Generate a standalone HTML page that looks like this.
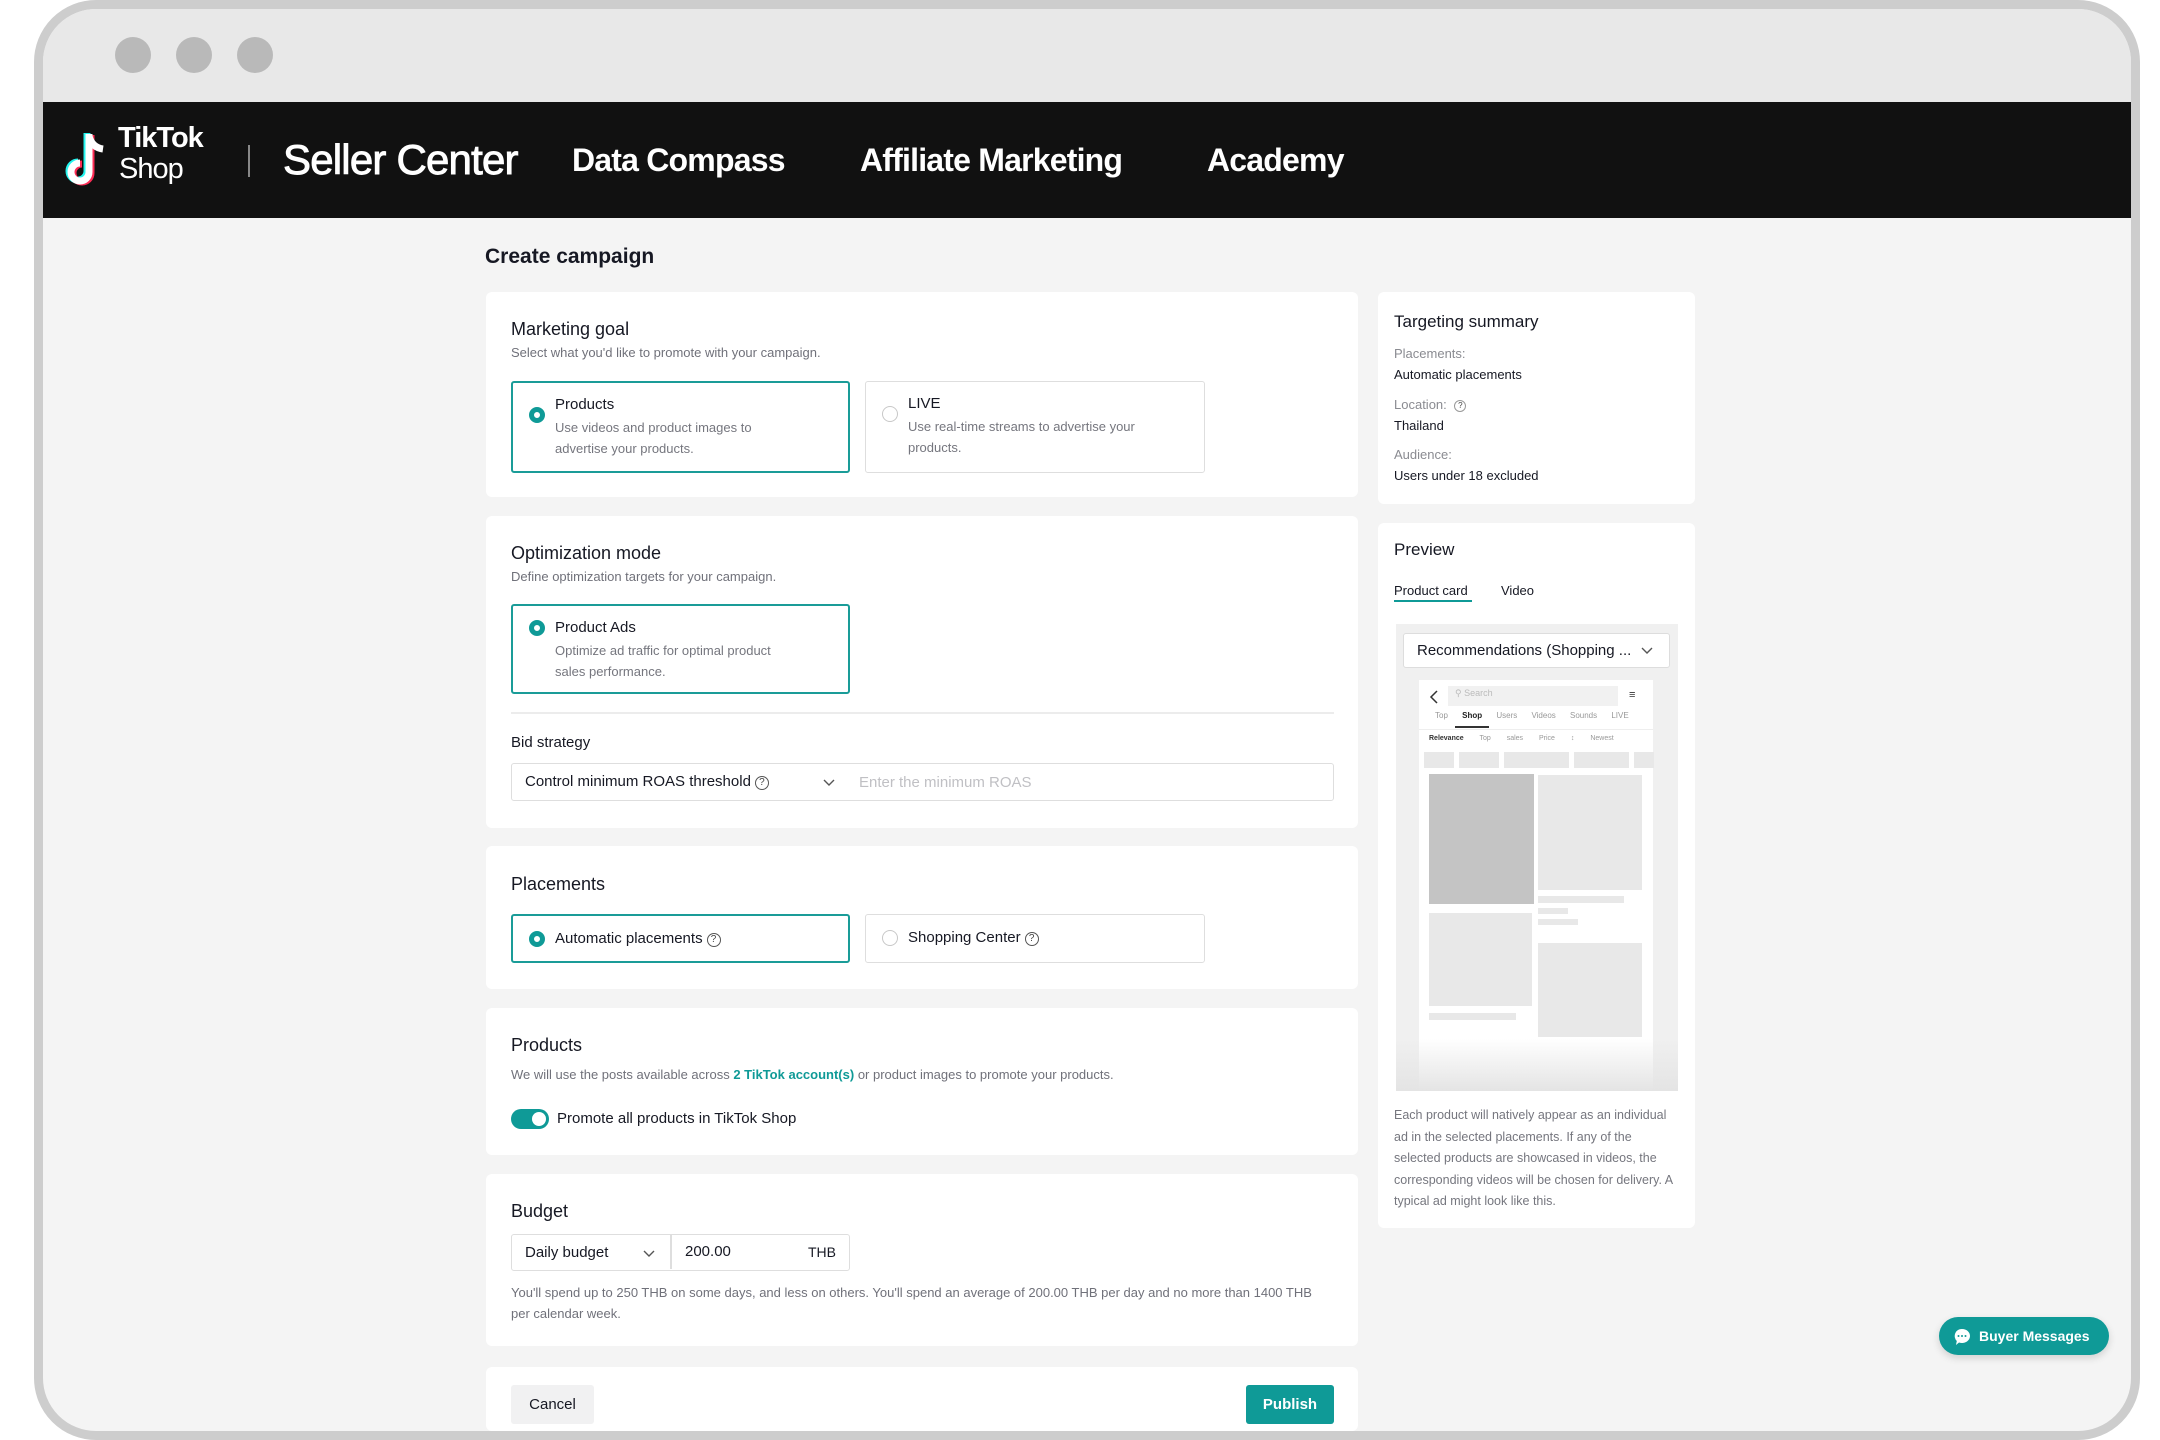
<!DOCTYPE html>
<html><head><meta charset="utf-8"><style>
*{box-sizing:border-box;margin:0;padding:0}
body{width:2160px;height:1440px;background:#fff;font-family:"Liberation Sans",Arial,sans-serif;position:relative;overflow:hidden;color:#161823}
#frame{position:absolute;left:34px;top:0;width:2106px;height:1440px;border:9px solid #cdcdcd;border-radius:62px;background:#f4f4f4;overflow:hidden}
#chrome{position:absolute;left:0;top:0;width:100%;height:93px;background:#e8e8e8}
.dot{position:absolute;top:28px;width:36px;height:36px;border-radius:50%;background:#b9b9b9}
#hdr{position:absolute;left:0;top:93px;width:100%;height:116px;background:#111}
.nav{position:absolute;top:0;line-height:116px;color:#fff;font-weight:bold;letter-spacing:-0.8px}
.abs{position:absolute}
.card{position:absolute;background:#fff;border-radius:6px}
.h{position:absolute;font-size:18px;color:#161823}
.sub{position:absolute;font-size:13px;color:#70717a}
.opt{position:absolute;border:1.5px solid #dedede;border-radius:3px;background:#fff}
.opt.sel{border:2px solid #1a9c98}
.rad{position:absolute;width:16px;height:16px;border-radius:50%;border:1.5px solid #c8c8c8;background:#fff}
.rad.on{border:5px solid #0f9a97}
.ot{position:absolute;font-size:15px;color:#161823}
.od{position:absolute;font-size:13px;color:#75767e;line-height:21px}
.q{display:inline-block;width:14px;height:14px;border:1.3px solid #555;border-radius:50%;font-size:10px;line-height:12px;text-align:center;vertical-align:1px;margin-left:4px;color:#444}
.ts{position:absolute;left:16px;font-size:13px}
.g{background:#e8e8e8;position:absolute}
</style></head><body>
<div id="frame">
 <div id="chrome">
  <div class="dot" style="left:72px"></div><div class="dot" style="left:133px"></div><div class="dot" style="left:194px"></div>
 </div>
 <div id="hdr">
  <svg class="abs" style="left:16px;top:28px" width="54" height="64" viewBox="0 0 54 64">
   <path d="M30 4v38a9 9 0 1 1-9-9" fill="none" stroke="#25f4ee" stroke-width="7" transform="translate(-2,-1)"/>
   <path d="M30 4v38a9 9 0 1 1-9-9" fill="none" stroke="#fe2c55" stroke-width="7" transform="translate(2,1)"/>
   <path d="M30 4v38a9 9 0 1 1-9-9M30 6c2 8 7 12 14 13" fill="none" stroke="#fff" stroke-width="7"/>
  </svg>
  <div class="nav" style="left:75px;top:-22px;font-size:29px;line-height:116px;letter-spacing:-1px">TikTok</div>
  <div class="nav" style="left:76px;top:9px;font-size:29px;font-weight:normal;letter-spacing:-1px">Shop</div>
  <div class="abs" style="left:205px;top:43px;width:2px;height:32px;background:#888"></div>
  <div class="nav" style="left:240px;font-size:42px;font-weight:normal;-webkit-text-stroke:0.9px #fff">Seller Center</div>
  <div class="nav" style="left:529px;font-size:32px">Data Compass</div>
  <div class="nav" style="left:817px;font-size:32px">Affiliate Marketing</div>
  <div class="nav" style="left:1164px;font-size:32px">Academy</div>
 </div>
</div>

<div class="abs" style="left:485px;top:245px;font-size:21px;font-weight:bold">Create campaign</div>

<!-- Card 1 -->
<div class="card" style="left:486px;top:292px;width:872px;height:205px">
 <div class="h" style="left:25px;top:27px">Marketing goal</div>
 <div class="sub" style="left:25px;top:53px">Select what you'd like to promote with your campaign.</div>
 <div class="opt sel" style="left:25px;top:89px;width:339px;height:92px">
  <div class="rad on" style="left:16px;top:24px"></div>
  <div class="ot" style="left:42px;top:13px">Products</div>
  <div class="od" style="left:42px;top:34px">Use videos and product images to<br>advertise your products.</div>
 </div>
 <div class="opt" style="left:379px;top:89px;width:340px;height:92px">
  <div class="rad" style="left:16px;top:24px"></div>
  <div class="ot" style="left:42px;top:13px">LIVE</div>
  <div class="od" style="left:42px;top:34px">Use real-time streams to advertise your<br>products.</div>
 </div>
</div>

<!-- Card 2 -->
<div class="card" style="left:486px;top:516px;width:872px;height:312px">
 <div class="h" style="left:25px;top:27px">Optimization mode</div>
 <div class="sub" style="left:25px;top:53px">Define optimization targets for your campaign.</div>
 <div class="opt sel" style="left:25px;top:88px;width:339px;height:90px">
  <div class="rad on" style="left:16px;top:14px"></div>
  <div class="ot" style="left:42px;top:13px">Product Ads</div>
  <div class="od" style="left:42px;top:34px">Optimize ad traffic for optimal product<br>sales performance.</div>
 </div>
 <div class="abs" style="left:25px;top:196px;width:823px;height:2px;background:#ececec"></div>
 <div class="abs" style="left:25px;top:218px;font-size:15px">Bid strategy</div>
 <div class="opt" style="left:25px;top:247px;width:823px;height:38px">
  <div class="abs" style="left:13px;top:9px;font-size:15px">Control minimum ROAS threshold<span class="q">?</span></div>
  <svg class="abs" style="left:311px;top:13px" width="12" height="10"><path d="M1 3l5 5 5-5" fill="none" stroke="#555" stroke-width="1.4"/></svg>
  <div class="abs" style="left:347px;top:10px;font-size:15px;color:#c0c0c4">Enter the minimum ROAS</div>
 </div>
</div>

<!-- Card 3 -->
<div class="card" style="left:486px;top:846px;width:872px;height:143px">
 <div class="h" style="left:25px;top:28px">Placements</div>
 <div class="opt sel" style="left:25px;top:68px;width:339px;height:49px">
  <div class="rad on" style="left:16px;top:15px"></div>
  <div class="ot" style="left:42px;top:14px">Automatic placements<span class="q">?</span></div>
 </div>
 <div class="opt" style="left:379px;top:68px;width:340px;height:49px">
  <div class="rad" style="left:16px;top:15px"></div>
  <div class="ot" style="left:42px;top:14px">Shopping Center<span class="q">?</span></div>
 </div>
</div>

<!-- Card 4 -->
<div class="card" style="left:486px;top:1008px;width:872px;height:147px">
 <div class="h" style="left:25px;top:27px">Products</div>
 <div class="sub" style="left:25px;top:59px">We will use the posts available across <span style="color:#0f9a97;font-weight:bold">2 TikTok account(s)</span> or product images to promote your products.</div>
 <div class="abs" style="left:25px;top:101px;width:38px;height:20px;border-radius:10px;background:#0f9a97"><div class="abs" style="right:3px;top:3px;width:14px;height:14px;border-radius:50%;background:#fff"></div></div>
 <div class="abs" style="left:71px;top:102px;font-size:15px">Promote all products in TikTok Shop</div>
</div>

<!-- Card 5 -->
<div class="card" style="left:486px;top:1174px;width:872px;height:172px">
 <div class="h" style="left:25px;top:27px">Budget</div>
 <div class="opt" style="left:25px;top:60px;width:339px;height:37px">
  <div class="abs" style="left:13px;top:9px;font-size:15px">Daily budget</div>
  <svg class="abs" style="left:131px;top:13px" width="12" height="10"><path d="M1 3l5 5 5-5" fill="none" stroke="#555" stroke-width="1.4"/></svg>
  <div class="abs" style="left:158px;top:0;width:1.5px;height:34px;background:#dedede"></div>
  <div class="abs" style="left:173px;top:8px;font-size:15px">200.00</div>
  <div class="abs" style="left:296px;top:9px;font-size:14px">THB</div>
 </div>
 <div class="sub" style="left:25px;top:108px;line-height:21px;width:820px">You'll spend up to 250 THB on some days, and less on others. You'll spend an average of 200.00 THB per day and no more than 1400 THB per calendar week.</div>
</div>

<!-- Card 6 -->
<div class="card" style="left:486px;top:1367px;width:872px;height:64px">
 <div class="abs" style="left:25px;top:18px;width:83px;height:39px;border-radius:3px;background:#f1f1f2;font-size:15px;text-align:center;line-height:39px">Cancel</div>
 <div class="abs" style="left:760px;top:18px;width:88px;height:39px;border-radius:3px;background:#0f9a97;color:#fff;font-size:15px;text-align:center;line-height:39px;font-weight:bold">Publish</div>
</div>

<!-- Targeting summary -->
<div class="card" style="left:1378px;top:292px;width:317px;height:212px">
 <div class="abs" style="left:16px;top:20px;font-size:17px">Targeting summary</div>
 <div class="ts" style="top:54px;color:#8a8b91">Placements:</div>
 <div class="ts" style="top:75px">Automatic placements</div>
 <div class="ts" style="top:105px;color:#8a8b91">Location: <span class="q" style="width:12px;height:12px;font-size:8px;line-height:10px;border-color:#999">?</span></div>
 <div class="ts" style="top:126px">Thailand</div>
 <div class="ts" style="top:155px;color:#8a8b91">Audience:</div>
 <div class="ts" style="top:176px">Users under 18 excluded</div>
</div>

<!-- Preview -->
<div class="card" style="left:1378px;top:523px;width:317px;height:705px">
 <div class="abs" style="left:16px;top:17px;font-size:17px">Preview</div>
 <div class="abs" style="left:16px;top:60px;font-size:13px">Product card</div>
 <div class="abs" style="left:16px;top:77px;width:78px;height:2px;background:#0f9a97"></div>
 <div class="abs" style="left:123px;top:60px;font-size:13px">Video</div>
 <div class="abs" style="left:18px;top:101px;width:282px;height:467px;background:#f0f0f0;overflow:hidden">
  <div class="abs" style="left:7px;top:9px;width:267px;height:35px;background:#fff;border:1px solid #ddd;border-radius:3px;font-size:15px;line-height:33px;padding-left:13px">Recommendations (Shopping ... <svg style="margin-left:6px" width="12" height="9"><path d="M1 2l5 5 5-5" fill="none" stroke="#555" stroke-width="1.4"/></svg></div>
  <div class="abs" style="left:23px;top:56px;width:234px;height:420px;background:#fff">
   <svg class="abs" style="left:10px;top:10px" width="10" height="14"><path d="M8 1L2 7l6 6" fill="none" stroke="#333" stroke-width="1.5"/></svg>
   <div class="g" style="left:29px;top:6px;width:170px;height:20px;background:#f1f1f1"></div>
   <div class="abs" style="left:36px;top:8px;font-size:9px;color:#bbb">&#9906; Search</div>
   <div class="abs" style="left:210px;top:9px;font-size:11px;color:#333">&#8801;</div>
   <div class="abs" style="left:16px;top:31px;font-size:8px;color:#999;word-spacing:12px">Top <b style="color:#222">Shop</b> Users Videos Sounds LIVE</div>
   <div class="abs" style="left:36px;top:46px;width:34px;height:2px;background:#333"></div>
   <div class="abs" style="left:0;top:49px;width:234px;height:1px;background:#eee"></div>
   <div class="abs" style="left:10px;top:55px;font-size:7px;color:#999;word-spacing:14px"><b style="color:#333">Relevance</b> Top&nbsp;sales Price&nbsp;↕ Newest</div>
   <div class="g" style="left:5px;top:72px;width:30px;height:16px"></div><div class="g" style="left:40px;top:72px;width:40px;height:16px"></div><div class="g" style="left:85px;top:72px;width:65px;height:16px"></div><div class="g" style="left:155px;top:72px;width:55px;height:16px"></div><div class="g" style="left:215px;top:72px;width:20px;height:16px"></div>
   <div class="g" style="left:10px;top:94px;width:105px;height:130px;background:#c4c4c4"></div>
   <div class="g" style="left:119px;top:95px;width:104px;height:115px"></div>
   <div class="g" style="left:119px;top:216px;width:86px;height:7px"></div><div class="g" style="left:119px;top:228px;width:30px;height:6px"></div><div class="g" style="left:119px;top:239px;width:40px;height:6px"></div>
   <div class="g" style="left:10px;top:233px;width:103px;height:93px"></div>
   <div class="g" style="left:119px;top:263px;width:104px;height:94px"></div>
   <div class="g" style="left:10px;top:333px;width:87px;height:7px"></div>
  </div>
  <div class="abs" style="left:0;top:415px;width:282px;height:52px;background:linear-gradient(rgba(240,240,240,0),#e4e4e4)"></div>
 </div>
 <div class="abs" style="left:16px;top:582px;width:285px;font-size:12.5px;line-height:21.5px;color:#75767e">Each product will natively appear as an individual ad in the selected placements. If any of the selected products are showcased in videos, the corresponding videos will be chosen for delivery. A typical ad might look like this.</div>
</div>

<!-- Buyer messages -->
<div class="abs" style="left:1939px;top:1317px;width:170px;height:38px;border-radius:19px;background:#0f9a97;color:#fff;font-weight:bold;font-size:14px;line-height:38px;padding-left:40px;box-shadow:0 3px 8px rgba(0,0,0,.15)">Buyer Messages
 <svg class="abs" style="left:14px;top:11px" width="18" height="18"><path d="M9 1a8 7 0 1 1-3 13.5L3 17l.8-4A7 7 0 0 1 9 1z" fill="#fff"/><circle cx="5.5" cy="8" r="1" fill="#0f9a97"/><circle cx="9" cy="8" r="1" fill="#0f9a97"/><circle cx="12.5" cy="8" r="1" fill="#0f9a97"/></svg>
</div>
</body></html>
